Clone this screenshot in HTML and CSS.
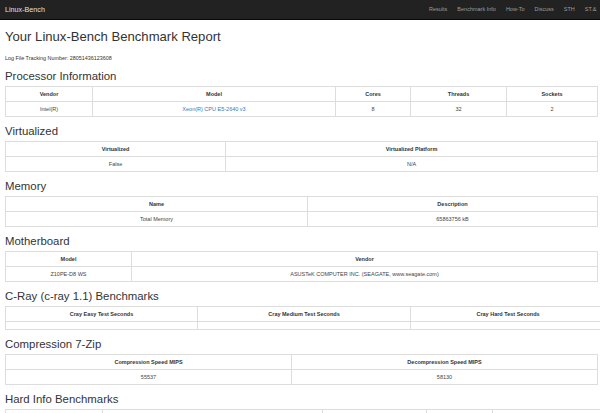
FILE: index.html
```html
<!DOCTYPE html>
<html lang="en">
<head>
<meta charset="utf-8">
<title>Linux-Bench Benchmark Report</title>
<link rel="stylesheet" href="styles.css">
</head>
<body>
<nav class="navbar">
  <a class="brand" href="#">Linux-Bench</a>
  <ul class="nav">
    <li><a href="#">Results</a></li>
    <li><a href="#">Benchmark Info</a></li>
    <li><a href="#">How-To</a></li>
    <li><a href="#">Discuss</a></li>
    <li><a href="#">STH</a></li>
    <li><a href="#">ST.&amp;</a></li>
  </ul>
</nav>
<main class="container">
  <h1>Your Linux-Bench Benchmark Report</h1>
  <p class="tracking">Log File Tracking Number: 28051436123608</p>

  <section class="block">
    <h2>Processor Information</h2>
    <table class="report">
      <colgroup><col class="p1"><col class="p2"><col class="p3"><col class="p4"><col class="p5"></colgroup>
      <tr><th>Vendor</th><th>Model</th><th>Cores</th><th>Threads</th><th>Sockets</th></tr>
      <tr><td>Intel(R)</td><td><a href="#">Xeon(R) CPU E5-2640 v3</a></td><td>8</td><td>32</td><td>2</td></tr>
    </table>
  </section>

  <section class="block">
    <h2>Virtualized</h2>
    <table class="report">
      <colgroup><col class="v1"><col class="v2"></colgroup>
      <tr><th>Virtualized</th><th>Virtualized Platform</th></tr>
      <tr><td>False</td><td>N/A</td></tr>
    </table>
  </section>

  <section class="block">
    <h2>Memory</h2>
    <table class="report">
      <colgroup><col class="m1"><col class="m2"></colgroup>
      <tr><th>Name</th><th>Description</th></tr>
      <tr><td>Total Memory</td><td>65863756 kB</td></tr>
    </table>
  </section>

  <section class="block">
    <h2>Motherboard</h2>
    <table class="report">
      <colgroup><col class="b1"><col class="b2"></colgroup>
      <tr><th>Model</th><th>Vendor</th></tr>
      <tr><td>Z10PE-D8 WS</td><td>ASUSTeK COMPUTER INC. (SEAGATE, www.seagate.com)</td></tr>
    </table>
  </section>

  <section class="block">
    <h2>C-Ray (c-ray 1.1) Benchmarks</h2>
    <table class="report wide">
      <colgroup><col class="c1"><col class="c2"><col class="c3"></colgroup>
      <tr><th>Cray Easy Test Seconds</th><th>Cray Medium Test Seconds</th><th>Cray Hard Test Seconds</th></tr>
      <tr><td></td><td></td><td></td></tr>
    </table>
  </section>

  <section class="block">
    <h2>Compression 7-Zip</h2>
    <table class="report">
      <colgroup><col class="z1"><col class="z2"></colgroup>
      <tr><th>Compression Speed MIPS</th><th>Decompression Speed MIPS</th></tr>
      <tr><td>55537</td><td>58130</td></tr>
    </table>
  </section>

  <section class="block">
    <h2>Hard Info Benchmarks</h2>
    <table class="report wide">
      <colgroup><col class="h1c"><col class="h2c"><col class="h3c"><col class="h4c"><col class="h5c"></colgroup>
      <tr><th>CPU Blowfish</th><th>CPU CryptoHash</th><th>CPU Fibonacci</th><th>CPU N-Queens</th><th>FPU FFT</th></tr>
      <tr><td></td><td></td><td></td><td></td><td></td></tr>
    </table>
  </section>
</main>
</body>
</html>
```

FILE: styles.css
```css
html, body {
  margin: 0;
  padding: 0;
  overflow: hidden;
  background: #fff;
}
body {
  font-family: "Liberation Sans", Arial, Helvetica, sans-serif;
  color: #333;
}
a { text-decoration: none; }

.navbar {
  display: grid;
  grid-template-columns: 419px max-content;
  align-items: center;
  height: 19px;
  padding-left: 5px;
  background: #222;
  border-bottom: 1px solid #080808;
  overflow: hidden;
}
.brand {
  color: #e0e0e0;
  font-size: 7.2px;
  line-height: 19px;
}
.nav {
  display: flex;
  margin: 0;
  padding: 0;
  list-style: none;
  white-space: nowrap;
}
.nav a {
  display: block;
  padding: 0 5px;
  color: #9d9d9d;
  font-size: 5.5px;
  line-height: 19px;
}

.container {
  padding: 0 3px 0 5px;
}
h1 {
  margin: 9px 0 0;
  font-size: 13.1px;
  line-height: 16px;
  font-weight: 400;
}
.tracking {
  margin: 9px 0 0;
  font-size: 5.4px;
  line-height: 8px;
}
h2 {
  margin: 7px 0 3px;
  font-size: 11.4px;
  line-height: 14px;
  font-weight: 400;
}

.report {
  width: 592px;
  border-collapse: collapse;
  table-layout: fixed;
  font-size: 5.5px;
  line-height: 7px;
}
.report.wide { width: 600px; }
.report th, .report td {
  padding: 3.5px 4px;
  border: 1px solid #ddd;
  text-align: center;
  white-space: nowrap;
  overflow: hidden;
}
.report th {
  font-weight: 700;
  padding: 4px 4px 3px;
}
.report td { color: #444; }
.report td a { color: #337ab7; }

.p1 { width: 87px; }
.p2 { width: 243px; }
.p3 { width: 75px; }
.p4 { width: 96px; }
.p5 { width: 91px; }
.v1 { width: 220px; }
.v2 { width: 372px; }
.m1 { width: 302px; }
.m2 { width: 290px; }
.b1 { width: 126px; }
.b2 { width: 466px; }
.c1 { width: 192px; }
.c2 { width: 213px; }
.c3 { width: 195px; }
.z1 { width: 286px; }
.z2 { width: 306px; }
.h1c { width: 97px; }
.h2c { width: 220px; }
.h3c { width: 104px; }
.h4c { width: 66px; }
.h5c { width: 113px; }
```
